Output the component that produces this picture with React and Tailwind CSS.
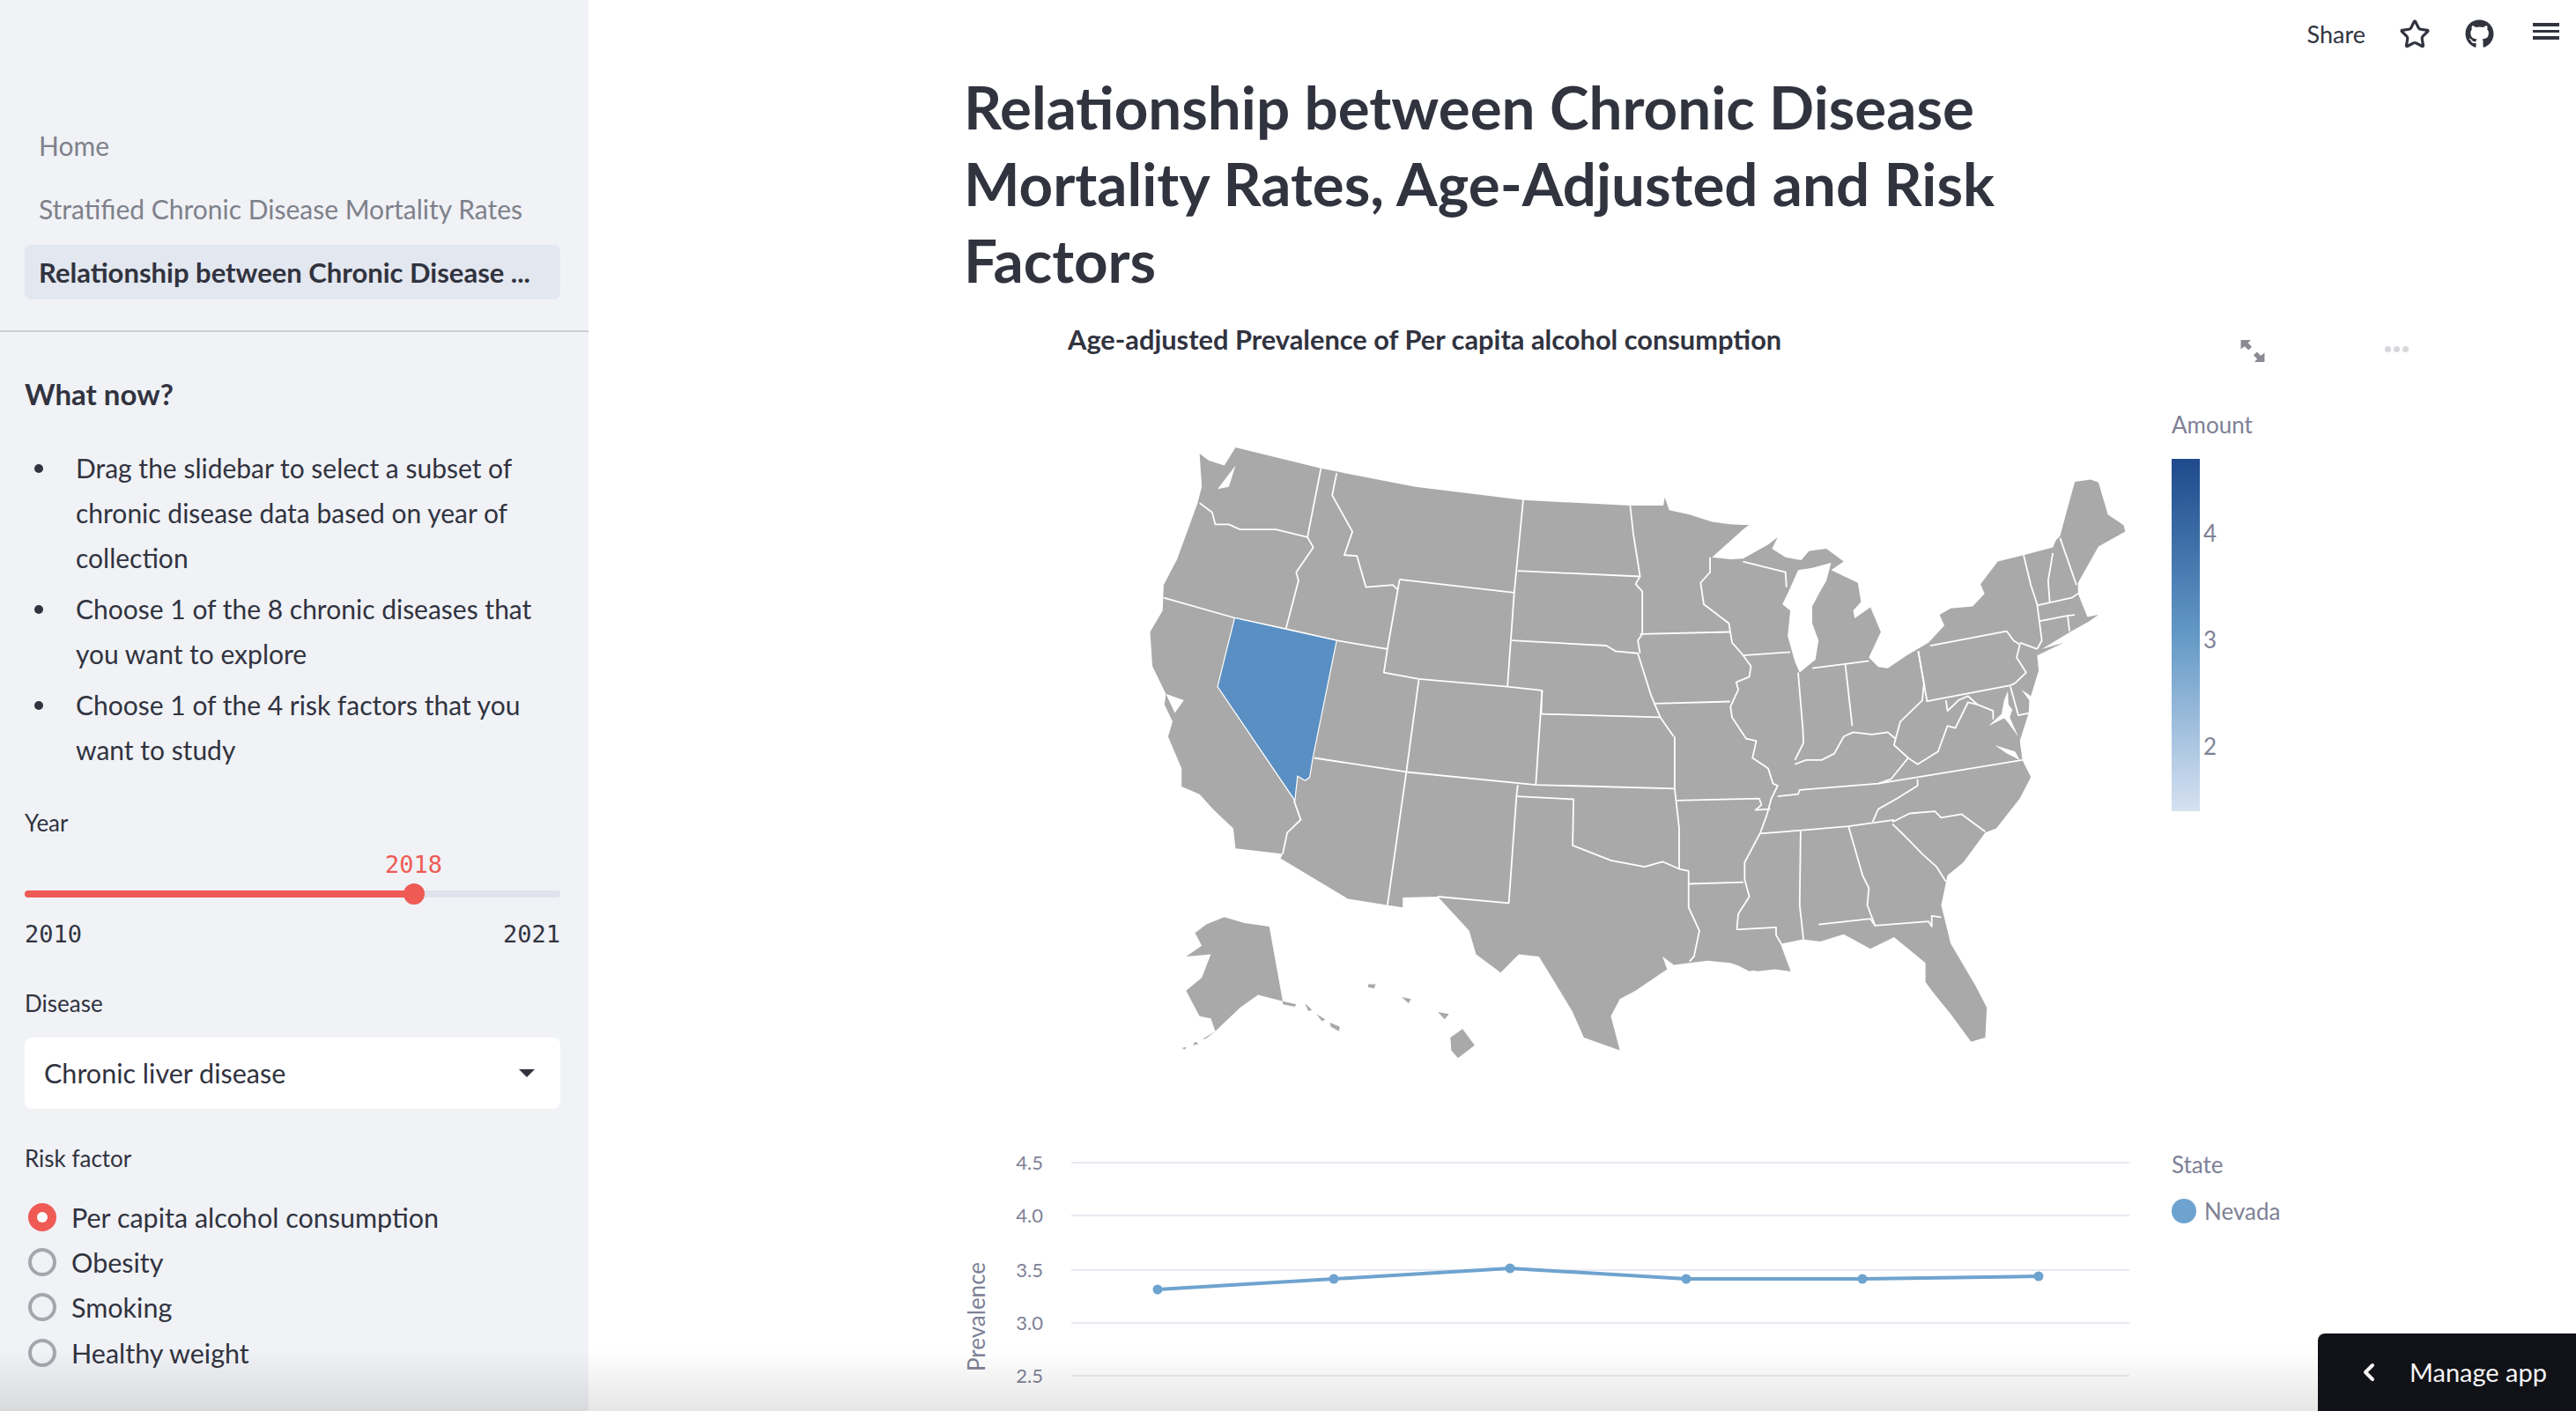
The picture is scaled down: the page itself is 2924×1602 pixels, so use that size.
import { ChevronLeft, Star } from "lucide-react";
import { FaGithub } from "react-icons/fa";

const years = [
  [1314, 1464],
  [1514, 1452],
  [1714, 1440],
  [1914, 1452],
  [2114, 1452],
  [2314, 1449],
];

const grid = [
  ["4.5", 1320],
  ["4.0", 1380],
  ["3.5", 1442],
  ["3.0", 1502],
  ["2.5", 1562],
];

const bullets = [
  "Drag the slidebar to select a subset of chronic disease data based on year of collection",
  "Choose 1 of the 8 chronic diseases that you want to explore",
  "Choose 1 of the 4 risk factors that you want to study",
];

// outlines read off the crops, in crop coordinates
const westLand =
  "160,72 180,88 215,100 240,58 430,107 640,150 880,181 1118,194 1192,194 1195,175 1205,205 1250,215 1300,232 1340,238 1380,240 1300,315 1280,370 1280,420 1340,470 1345,520 1385,570 1350,610 1340,680 1400,770 1430,830 1445,850 1400,960 1370,1050 1380,1120 1355,1185 1440,1185 1475,1285 1440,1280 1400,1285 1340,1265 1290,1260 1215,1270 1190,1250 1200,1280 1130,1330 1095,1350 1075,1390 1095,1470 1015,1440 990,1380 950,1310 915,1250 870,1245 830,1288 775,1245 760,1190 690,1110 612,1112 612,1135 580,1130 490,1115 340,1020 345,1010 240,997 235,950 190,905 160,870 120,852 120,810 90,735 100,700 82,660 85,635 55,570 50,490 78,440 80,380 110,320 155,190 165,150";

const westBorders = [
  "160,188 188,210 195,238 225,238 250,250 330,250 400,268",
  "430,107 400,268 413,292 375,350 380,370 352,483",
  "465,118 455,170 500,255 482,310 510,312 530,385 590,380 600,390",
  "80,410 238,457 352,483 465,510 578,530",
  "605,367 860,398 845,618",
  "605,367 578,530 570,585 648,600 845,618 922,627 920,682",
  "880,181 860,398",
  "868,347 1140,360",
  "855,510 1065,522 1085,535 1135,540 1165,640 1185,690 1215,735",
  "1118,194 1125,260 1140,360 1130,378 1145,395 1145,495 1135,510 1140,540",
  "1140,495 1340,490",
  "920,682 1185,690",
  "922,627 908,848",
  "648,600 620,818",
  "415,785 620,818 908,848 1217,857",
  "1217,735 1217,857 1220,885 1227,950 1227,1045",
  "620,818 578,1130",
  "868,848 865,875 848,1125 690,1110",
  "865,875 992,882 990,990 1075,1025 1150,1040 1190,1028 1227,1045 1248,1050 1248,1135 1272,1190 1260,1250 1250,1262",
  "1170,658 1340,653",
  "1220,885 1405,880 1410,895 1397,907 1430,905",
  "1248,1080 1370,1076",
  "370,885 385,930 355,960 345,1010",
];

const nevada = "238,457 465,510 412,785 405,830 395,838 378,828 372,885 200,618";

const alaska =
  "150,1195 175,1175 215,1158 260,1172 315,1180 345,1355 290,1340 250,1370 225,1395 195,1425 185,1395 160,1390 130,1330 165,1300 185,1245 130,1250 165,1225";

const alaskaBits = [
  "345,1355 375,1362 372,1368 345,1362",
  "395,1360 410,1375 402,1378",
  "420,1385 440,1398 432,1402",
  "450,1405 472,1415 470,1425 452,1415",
  "195,1425 175,1442 165,1445",
  "150,1450 158,1455 145,1458",
  "120,1465 130,1462 128,1468",
];

const hawaii = [
  "718,1440 745,1420 772,1458 735,1488 720,1470",
  "690,1380 715,1385 705,1397",
  "610,1345 630,1350 625,1360",
  "535,1315 552,1315 548,1325 535,1322",
];

const eastLand =
  "0,210 100,228 150,240 240,240 180,265 120,315 180,320 220,318 300,285 330,268 312,295 355,315 405,322 430,300 485,295 540,325 500,345 585,375 595,420 570,440 575,458 625,432 658,490 620,550 650,572 680,575 740,545 810,515 860,475 845,450 880,435 950,430 988,400 975,378 1030,325 1112,310 1205,292 1215,275 1228,265 1250,205 1275,138 1325,133 1350,140 1380,215 1430,240 1435,255 1350,290 1285,375 1285,400 1315,455 1350,450 1320,465 1260,490 1170,530 1240,515 1155,545 1160,580 1135,640 1105,625 1130,650 1128,680 1100,745 1108,790 1135,830 1100,880 1025,950 990,960 920,1030 870,1060 850,1130 880,1220 960,1320 995,1370 990,1440 945,1450 880,1385 820,1330 800,1310 800,1265 700,1205 625,1232 540,1198 465,1215 410,1210 345,1220 320,1240 370,1285 300,1275 240,1285 160,1255 60,1260 0,1270";

const eastWater = [
  "395,345 440,340 500,328 485,370 465,395 440,430 440,470 460,510 450,555 400,585 385,560 362,500 370,440 345,425 365,395",
  "1050,650 1062,628 1064,660 1076,672 1068,690 1095,735 1062,702 1050,692 1000,710 1042,682",
  "1020,755 1085,770 1100,790 1060,775",
];

const eastBorders = [
  "115,315 115,350 85,375 95,425 175,470 185,515 215,540 245,570 240,595 198,608 205,625 180,665 185,690 230,740 262,745 250,785 300,810 315,845 330,850 310,880 295,920 275,960 225,1030 225,1070 240,1110 205,1150 200,1187",
  "220,325 355,350 358,385",
  "218,545 370,537",
  "395,585 410,715 412,750 385,790",
  "440,575 545,565 620,558",
  "545,565 567,710",
  "385,800 420,790 470,790 510,775 540,735 570,725 630,730 680,725 705,740 720,700 790,650 795,610 777,535",
  "777,535 805,652 1070,615 1085,610",
  "815,522 1058,488 1080,510 1100,520 1090,550 1120,585 1085,610",
  "1100,515 1155,530",
  "330,875 395,870 400,860 650,845 775,830 1108,790",
  "650,845 690,835 745,785",
  "705,740 700,755 745,785 775,800 840,770 870,710 895,715 935,655 965,660",
  "865,650 870,675 905,650 935,640 965,660 1015,675 1015,695",
  "1070,618 1095,685 1130,680",
  "275,962 400,955 555,945 700,930",
  "775,835 775,850 710,880 650,905 632,935",
  "695,935 750,915 830,910 850,925 915,917 990,958",
  "695,940 730,965 790,1010 835,1040 865,1075",
  "403,957 400,1130 412,1210",
  "555,945 600,1060 620,1090 615,1130 640,1178",
  "460,1175 625,1162 640,1178 810,1168 820,1180 820,1155 850,1158",
  "200,1187 325,1182 325,1200 345,1225",
  "1112,310 1135,380 1155,425 1170,510 1155,530",
  "1205,305 1190,370 1195,420",
  "1228,270 1280,380",
  "1155,428 1265,410 1285,400",
  "1160,465 1250,452 1275,450",
  "1252,452 1258,488",
];

function Borders({ lines }) {
  return lines.map((pts) => (
    <polyline
      key={pts}
      points={pts}
      fill="none"
      stroke="#fff"
      strokeWidth="1.8"
      strokeLinejoin="round"
      vectorEffect="non-scaling-stroke"
    />
  ));
}

function UsMap() {
  return (
    <svg
      viewBox="1290 460 1130 770"
      className="w-[1130px] h-[770px] ml-[196px] shrink-0">
      <g transform="translate(1280 480) scale(0.5102 0.4847)">
        <polygon points={westLand} fill="#a9a9a9" />
        <polygon points={alaska} fill="#a9a9a9" />
        {[...alaskaBits, ...hawaii].map((pts) => (
          <polygon key={pts} points={pts} fill="#a9a9a9" />
        ))}
        <polygon points="85,635 125,650 105,680" fill="#fff" />
        <polygon points="200,155 240,100 225,150" fill="#fff" />
      </g>
      <g transform="translate(1900 480) scale(0.357 0.4847)">
        <polygon points={eastLand} fill="#a9a9a9" />
        {eastWater.map((pts) => (
          <polygon key={pts} points={pts} fill="#fff" />
        ))}
        <Borders lines={eastBorders} />
      </g>
      <g transform="translate(1280 480) scale(0.5102 0.4847)">
        <Borders lines={westBorders} />
        <polygon
          points={nevada}
          fill="#5a8fc3"
          stroke="#fff"
          strokeWidth="1.2"
          vectorEffect="non-scaling-stroke"
        />
      </g>
    </svg>
  );
}

function LineChart() {
  const line = years.map((p) => p.join(",")).join(" ");
  return (
    <svg
      viewBox="1074 1300 1360 302"
      className="w-[1360px] h-[302px] ml-[-20px] shrink-0 font-[Lato,sans-serif]">
      {grid.map(([label, y]) => (
        <g key={label}>
          <line x1="1216" x2="2417" y1={y} y2={y} stroke="#e6eaf1" strokeWidth="2" />
          <text x="1184" y={y + 8} textAnchor="end" fontSize="22" fill="#7e8196">
            {label}
          </text>
        </g>
      ))}
      <text
        transform="translate(1118 1495) rotate(-90)"
        textAnchor="middle"
        fontSize="26"
        fill="#7e8196">
        Prevalence
      </text>
      <polyline points={line} fill="none" stroke="#6ea3cf" strokeWidth="4" />
      {years.map(([x, y]) => (
        <circle key={x} cx={x} cy={y} r="5.5" fill="#6ea3cf" />
      ))}
    </svg>
  );
}

function Radio({ label, on }) {
  return (
    <div className="flex items-center h-[51.3px] pl-[4px]">
      {on ? (
        <span className="w-[32px] h-[32px] rounded-full bg-[#ef5a55] flex items-center justify-center">
          <span className="w-[12px] h-[12px] rounded-full bg-white" />
        </span>
      ) : (
        <span className="w-[32px] h-[32px] rounded-full border-[4px] border-[#a6a7ae]" />
      )}
      <span className="ml-[17px] text-[30.5px] leading-[40px]">{label}</span>
    </div>
  );
}

function Sidebar() {
  return (
    <aside className="w-[668px] h-full shrink-0 bg-[#f0f2f6] text-[#31333f] flex flex-col pt-[134px]">
      <nav className="pl-[28px] pr-[32px] flex flex-col gap-[10px]">
        <div className="h-[62px] px-[16px] flex items-center text-[30px] text-[#7f818b]">Home</div>
        <div className="h-[62px] px-[16px] flex items-center text-[30px] text-[#7f818b]">
          Stratified Chronic Disease Mortality Rates
        </div>
        <div className="h-[62px] px-[16px] flex items-center rounded-[8px] bg-[#e3e7ef] text-[31px] font-bold whitespace-nowrap">
          Relationship between Chronic Disease ...
        </div>
      </nav>
      <div className="mt-[35px] h-[2px] bg-[#cbcdd3]" />
      <div className="pl-[28px] pr-[32px]">
        <h3 className="mt-[45px] text-[33px] leading-[50px] font-bold">What now?</h3>
        <ul className="mt-[34px] flex flex-col gap-[7px] text-[30px] leading-[51px]">
          {bullets.map((text) => (
            <li key={text} className="flex">
              <span className="h-[51px] w-[58px] shrink-0 flex items-center pl-[11px]">
                <span className="w-[10px] h-[10px] rounded-full bg-[#31333f]" />
              </span>
              <span>{text}</span>
            </li>
          ))}
        </ul>
        <div className="mt-[41px] text-[26px] leading-[32px]">Year</div>
        <div className="mt-[15px] ml-[409px] font-['DejaVu_Sans_Mono',monospace] text-[27px] leading-[34px] text-[#ef5a55]">
          2018
        </div>
        <div className="relative mt-[4px] h-[24px] flex items-center">
          <div className="w-full h-[8px] rounded-full bg-[#e0e2ec]">
            <div className="w-[442px] h-full rounded-full bg-[#ef5a55]" />
          </div>
          <span className="absolute left-[430px] w-[24px] h-[24px] rounded-full bg-[#ef5a55]" />
        </div>
        <div className="mt-[17px] flex justify-between font-['DejaVu_Sans_Mono',monospace] text-[27px] leading-[34px]">
          <span>2010</span>
          <span>2021</span>
        </div>
        <div className="mt-[45px] text-[26px] leading-[32px]">Disease</div>
        <div className="mt-[23px] h-[81px] rounded-[8px] bg-white flex items-center justify-between pl-[22px] pr-[29px]">
          <span className="text-[30.5px]">Chronic liver disease</span>
          <span className="w-0 h-0 border-x-[9px] border-x-transparent border-t-[9px] border-t-[#31333f]" />
        </div>
        <div className="mt-[40px] text-[26px] leading-[32px]">Risk factor</div>
        <div className="mt-[25px] flex flex-col">
          <Radio label="Per capita alcohol consumption" on />
          <Radio label="Obesity" />
          <Radio label="Smoking" />
          <Radio label="Healthy weight" />
        </div>
      </div>
    </aside>
  );
}

function Header() {
  return (
    <header className="h-[78px] flex justify-end items-start pt-[24px] pr-[19px] text-[#31333f]">
      <span className="text-[27px] leading-[30px]">Share</span>
      <Star className="ml-[38px] mt-[-3px] w-[36px] h-[36px]" strokeWidth={2.1} />
      <FaGithub className="ml-[39px] mt-[-2px] w-[33px] h-[33px]" />
      <div className="ml-[44px] mt-[2px] w-[30px] flex flex-col gap-[4px]">
        <span className="h-[3.5px] bg-[#31333f]" />
        <span className="h-[3.5px] bg-[#31333f]" />
        <span className="h-[3.5px] bg-[#31333f]" />
      </div>
    </header>
  );
}

function Toolbar() {
  return (
    <div className="absolute left-[1449px] top-[-74px] flex items-start">
      <svg viewBox="0 0 28 26" className="w-[28px] h-[25px]" fill="#8a8b92">
        <path d="M0 0h12L8.500 3.500 13 8l-4 4-4.500-4.500L0 11z" />
        <path d="M28 26H16l3.500-3.500L15 18l4-4 4.500 4.500L28 15z" />
      </svg>
      <div className="ml-[136px] mt-[7px] flex gap-[3px]">
        <span className="w-[7px] h-[7px] rounded-full bg-[#d8d8dc]" />
        <span className="w-[7px] h-[7px] rounded-full bg-[#d8d8dc]" />
        <span className="w-[7px] h-[7px] rounded-full bg-[#d8d8dc]" />
      </div>
    </div>
  );
}

export default function App() {
  return (
    <div className="relative w-[2924px] h-[1602px] overflow-hidden bg-white flex font-[Lato,sans-serif]">
      <Sidebar />
      <main className="flex-1 flex flex-col text-[#31333f]">
        <Header />
        <div className="pl-[426px]">
          <h1 className="w-[1300px] text-[67.3px] leading-[87px] font-bold">
            Relationship between Chronic Disease Mortality Rates, Age-Adjusted and Risk Factors
          </h1>
          <div className="relative mt-[27px] ml-[118px] text-[30.8px] leading-[40px] font-bold h-[94px]">
            Age-adjusted Prevalence of Per capita alcohol consumption
          </div>
          <div className="relative">
            <Toolbar />
          </div>
          <div className="flex">
            <UsMap />
            <div className="ml-[45px] mt-[6px] text-[#7e8196] text-[26px] leading-[32px]">
              <div>Amount</div>
              <div className="mt-[23px] flex">
                <div className="w-[32px] h-[400px] bg-linear-to-b from-[#1f4a8c] via-[#6399c6] to-[#d6e1f1]" />
                <div className="relative w-[30px]">
                  <span className="absolute left-[4px] top-[68px]">4</span>
                  <span className="absolute left-[4px] top-[189px]">3</span>
                  <span className="absolute left-[4px] top-[310px]">2</span>
                </div>
              </div>
            </div>
          </div>
          <div className="mt-[70px] flex">
            <LineChart />
            <div className="ml-[31px] mt-[6px] text-[#7e8196] text-[26px] leading-[32px]">
              <div>State</div>
              <div className="mt-[21px] flex items-center gap-[9px]">
                <span className="w-[28px] h-[28px] rounded-full bg-[#6ea3cf]" />
                Nevada
              </div>
            </div>
          </div>
        </div>
      </main>
      <div className="absolute inset-x-0 bottom-0 h-[70px] bg-linear-to-b from-transparent to-black/10" />
      <div className="absolute right-0 bottom-0 w-[293px] h-[88px] rounded-tl-[8px] bg-[#111217] text-[#f4f4f5] flex items-center pl-[42px] text-[29px]">
        <ChevronLeft className="w-[32px] h-[32px]" strokeWidth={3} />
        <span className="ml-[30px]">Manage app</span>
      </div>
    </div>
  );
}
